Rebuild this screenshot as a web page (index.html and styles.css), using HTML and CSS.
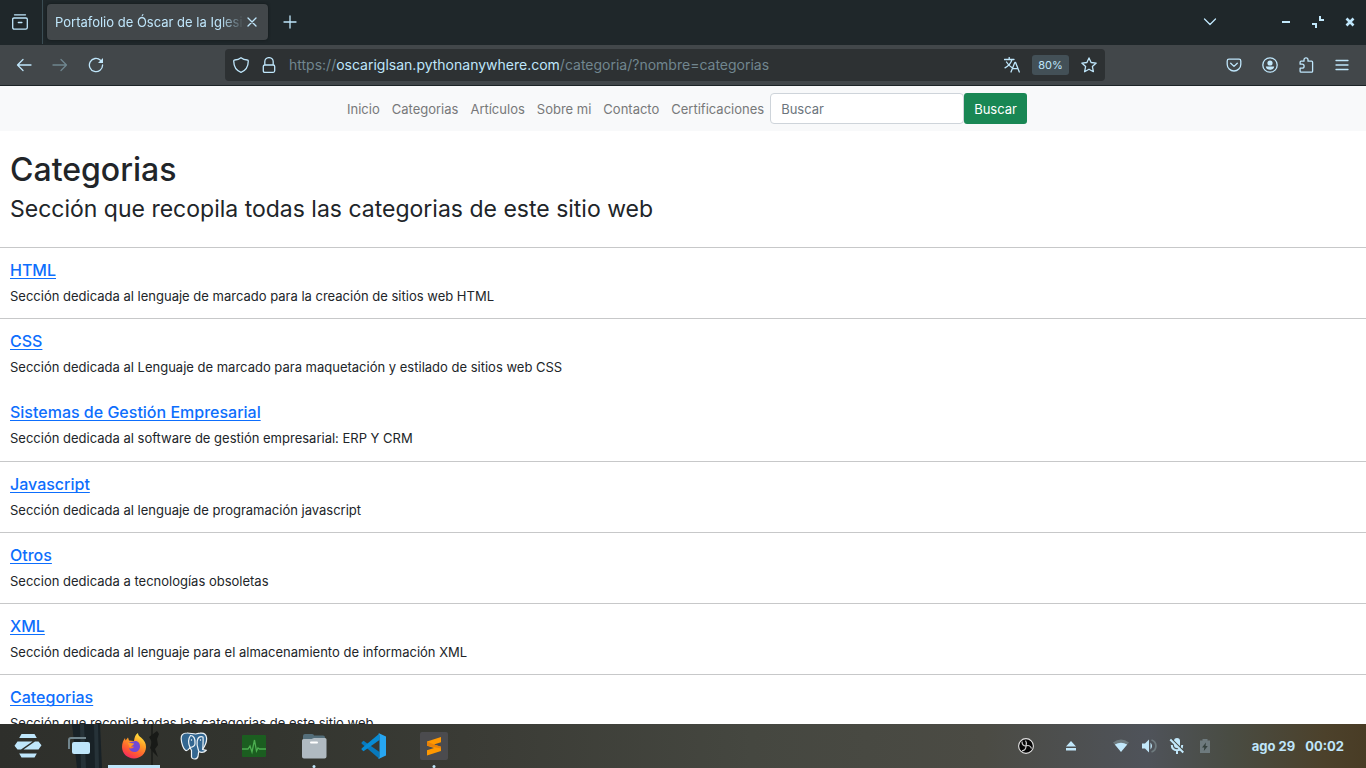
FILE: index.html
```html
<!DOCTYPE html>
<html lang="es">
<head>
<meta charset="utf-8">
<meta name="viewport" content="width=device-width, initial-scale=1">
<title>Portafolio de Óscar de la Iglesia</title>
<link rel="stylesheet" href="styles.css">
</head>
<body>
<header class="browser">
  <div class="tabbar">
    <button class="icon-btn view-btn" aria-label="Vista de Firefox"><svg class="icon" viewBox="0 0 16 16"><path d="M2.5 .8h11M2 4h12q1.300 0 1.300 1.300v8.200q0 1.700-1.700 1.700H2.400q-1.700 0-1.700-1.700V5.300Q.7 4 2 4zM6.300 8.500h3.600"/></svg></button>
    <div class="tab">
      <span class="tab-title">Portafolio de Óscar de la Iglesia</span>
      <button class="tab-close" aria-label="Cerrar pestaña"><svg class="icon small" viewBox="0 0 10 10"><path d="M1 1l8 8M9 1l-8 8"/></svg></button>
    </div>
    <button class="icon-btn new-tab" aria-label="Nueva pestaña"><svg class="icon" viewBox="0 0 16 16"><path d="M8 2v12M2 8h12"/></svg></button>
    <button class="icon-btn list-tabs" aria-label="Listar pestañas"><svg class="icon" viewBox="0 0 16 16"><path d="M2.500 5L8 10.500 13.500 5"/></svg></button>
    <div class="window-btns">
      <button class="win-btn" aria-label="Minimizar"><svg class="icon" viewBox="0 0 16 16"><path class="solid" d="M4 7h8v2H4z"/></svg></button>
      <button class="win-btn" aria-label="Restaurar"><svg class="icon" viewBox="0 0 16 16"><path class="solid" d="M9 2h2v3h3v2H9zM2 9h5v5H5v-3H2z"/></svg></button>
      <button class="win-btn" aria-label="Cerrar"><svg class="icon" viewBox="0 0 16 16"><path class="bold" d="M4.500 4.500l7 7M11.500 4.500l-7 7"/></svg></button>
    </div>
  </div>
  <div class="toolbar">
    <div class="history">
      <button class="icon-btn" aria-label="Atrás"><svg class="icon" viewBox="0 0 16 16"><path d="M15 8H1.500M7 2.500L1.500 8 7 13.500"/></svg></button>
      <button class="icon-btn dim" aria-label="Adelante"><svg class="icon" viewBox="0 0 16 16"><path d="M1 8h13.500M9 2.500L14.500 8 9 13.500"/></svg></button>
      <button class="icon-btn" aria-label="Recargar"><svg class="icon" viewBox="0 0 16 16"><path d="M14.600 8A6.600 6.600 0 1 1 12.500 3.200"/><path class="solid" d="M15 1v5h-5z"/></svg></button>
    </div>
    <div class="urlbar">
      <svg class="icon" viewBox="0 0 16 16"><path d="M8 .7C6 2.300 4 2.800 1.600 3c-.5 0-.9.5-.9 1C.8 9.500 3 13.500 8 15.300c5-1.800 7.200-5.800 7.300-11.300 0-.5-.4-1-.9-1C12 2.800 10 2.300 8 .7z"/></svg>
      <svg class="icon" viewBox="0 0 16 16"><path d="M3.800 8V4.800a4.200 4.200 0 0 1 8.400 0V8M3.800 8h8.400q1.500 0 1.500 1.500v4.300q0 1.500-1.500 1.500H3.800q-1.500 0-1.500-1.500V9.500Q2.300 8 3.800 8z"/></svg>
      <span class="url">https://<b>oscariglsan.pythonanywhere.com</b>/categoria/?nombre=categorias</span>
      <button class="url-btn" aria-label="Traducir"><svg class="icon" viewBox="0 0 16 16"><path d="M.5 2.500h9.500M5.200.5v2M8 2.500C7 6 4.500 9 1 10.800M2.500 5C4 7.500 5 8.800 7.500 10.300M7 15l3.800-9.500h.8L15.300 15M8.500 11.700h5.500"/></svg></button>
      <button class="zoom">80%</button>
      <button class="url-btn" aria-label="Marcador"><svg class="icon" viewBox="0 0 16 16"><path d="M8 .9l2.100 4.600 5.100.6-3.800 3.500 1 5.100L8 12.200l-4.400 2.500 1-5.100L.8 6.100l5.100-.6z"/></svg></button>
    </div>
    <div class="tools">
      <button class="icon-btn" aria-label="Pocket"><svg class="icon" viewBox="0 0 16 16"><path d="M3 2.200h10q1.800 0 1.800 1.800v3.200a6.800 6.800 0 0 1-13.600 0V4Q1.200 2.200 3 2.200zM4.700 6.200L8 9.400l3.300-3.200"/></svg></button>
      <button class="icon-btn" aria-label="Cuenta"><svg class="icon" viewBox="0 0 16 16"><circle cx="8" cy="8" r="7.200"/><circle class="solid" cx="8" cy="6" r="2.600"/><path class="solid" d="M3.800 9.500h8.400q-.5 3.300-4.200 3.300T3.800 9.500z"/></svg></button>
      <button class="icon-btn" aria-label="Extensiones"><svg class="icon" viewBox="0 0 16 16"><path d="M6 4.200V2.800a2 2 0 0 1 4 0v1.400h3.600q1 0 1 1v9q0 1-1 1H3.100q-1 0-1-1v-3h2a2 2 0 0 0 0-4h-2V5.200q0-1 1-1z"/></svg></button>
      <button class="icon-btn" aria-label="Menú"><svg class="icon" viewBox="0 0 16 16"><path d="M2 3.500h12M2 8h12M2 12.500h12"/></svg></button>
    </div>
  </div>
</header>

<div class="page">
  <nav class="navbar">
    <ul class="nav-list">
      <li><a class="nav-link" href="#">Inicio</a></li>
      <li><a class="nav-link" href="#">Categorias</a></li>
      <li><a class="nav-link" href="#">Artículos</a></li>
      <li><a class="nav-link" href="#">Sobre mi</a></li>
      <li><a class="nav-link" href="#">Contacto</a></li>
      <li><a class="nav-link" href="#">Certificaciones</a></li>
    </ul>
    <form class="search">
      <input class="search-input" type="search" placeholder="Buscar" aria-label="Buscar">
      <button class="search-btn" type="submit">Buscar</button>
    </form>
  </nav>
  <main>
    <div class="intro">
      <h1 class="title">Categorias</h1>
      <h2 class="subtitle">Sección que recopila todas las categorias de este sitio web</h2>
    </div>
    <article class="entry"><h3 class="entry-title"><a href="#">HTML</a></h3><p class="entry-text">Sección dedicada al lenguaje de marcado para la creación de sitios web HTML</p></article>
    <article class="entry"><h3 class="entry-title"><a href="#">CSS</a></h3><p class="entry-text">Sección dedicada al Lenguaje de marcado para maquetación y estilado de sitios web CSS</p></article>
    <article class="entry joined"><h3 class="entry-title"><a href="#">Sistemas de Gestión Empresarial</a></h3><p class="entry-text">Sección dedicada al software de gestión empresarial: ERP Y CRM</p></article>
    <article class="entry"><h3 class="entry-title"><a href="#">Javascript</a></h3><p class="entry-text">Sección dedicada al lenguaje de programación javascript</p></article>
    <article class="entry"><h3 class="entry-title"><a href="#">Otros</a></h3><p class="entry-text">Seccion dedicada a tecnologías obsoletas</p></article>
    <article class="entry"><h3 class="entry-title"><a href="#">XML</a></h3><p class="entry-text">Sección dedicada al lenguaje para el almacenamiento de información XML</p></article>
    <article class="entry"><h3 class="entry-title"><a href="#">Categorias</a></h3><p class="entry-text">Sección que recopila todas las categorias de este sitio web</p></article>
  </main>
</div>

<footer class="taskbar">
  <svg class="wallpaper" width="170" height="44" viewBox="0 0 170 44"><path d="M72 0h28l2 44H77z" fill="#182126"/><path d="M80 0h4l2 44h-5zM94 0h4l1 44h-4z" fill="#263238"/><path d="M151 0h2v44h-2z" fill="#1f211d"/><path d="M153 10l4-3 2 3-2 5 1 6-3 4 3 8-5-5-3-4 2-6-3-5z" fill="#181a17"/></svg>
  <div class="launchers">
    <button class="app narrow" aria-label="Zorin"><svg width="28" height="28" viewBox="0 0 28 28"><g fill="#bfe6fb"><path d="M7.500 2h13l2.300 4H5.200zM3.500 9.500h15L7 17.500H3.500L.5 13.700zM24.500 17.500h-15L21 9.500h3.500l3 3.800zM5.200 21.500h17.600L20.500 25.500h-13z"/></g></svg></button>
    <button class="app narrow" aria-label="Vista de tareas"><svg width="24" height="20" viewBox="0 0 24 20"><path d="M2 13V4q0-2 2-2h15" fill="none" stroke="#71858d" stroke-width="2"/><rect x="5" y="6" width="18" height="12" rx="2" fill="#bfe6fb"/></svg></button>
    <button class="app active" aria-label="Firefox"><svg width="26" height="26" viewBox="0 0 26 26"><defs><linearGradient id="ff" x1=".8" y1="0" x2=".3" y2="1"><stop offset="0" stop-color="#fff044"/><stop offset=".4" stop-color="#ff9a25"/><stop offset=".75" stop-color="#ff5634"/><stop offset="1" stop-color="#f52665"/></linearGradient></defs><path fill="url(#ff)" d="M17 0c0 2 1 3 3 4.500C23.500 7.500 25 10 25 14c0 6.500-5.300 11.500-12 11.500S1 20.500 1 14c0-4 1.500-7 3-9l.5 2.500L7 4.500l1 3 5 .5c.5-4 1.500-6.500 4-8z"/><path fill="#7248d5" d="M8 9.500l6-1.500c3.500 0 5 2.500 5 5.500 0 3.500-2.500 5.500-5.500 5.500-2.500 0-5-1.500-5.500-4 2 1 4 .5 5-1.200l-3-.3z"/><path fill="#ff9827" d="M6.500 9.500l6.500 1c0 1.700-2.500 1.700-3 3.500-1 1-2 0-2-1.500z"/></svg></button>
    <button class="app" aria-label="PostgreSQL"><svg width="28" height="28" viewBox="0 0 28 28"><g fill="#336791" stroke="#edf3f6" stroke-width="1.200" stroke-linejoin="round"><path d="M7 1C2.500 1 1 3.500 1.200 7c.2 4 2 10 4.500 11.500 2 .7 3.300-1.500 4.300-3l1.500 3V25c.5 2.500 5.500 3 6.500-.5l.7-5c2.800 1.300 5.800.7 7.600-1.200l-3.800-.8c2.500-3.500 4.500-8.500 4-12C26 2.200 23.500.7 20 1.200c-2 .2-3 .5-4.500.8C13 2 10 .9 7 1z"/><path fill="none" d="M10 15.500C8 11 8 7 10.500 3.500c3 0 5 3 4.500 8 0 2.500-2 3.500-5 4M18.700 19c-1.200-4-2.200-6-1.500-10C18 5 20 4 23 5c.5 4-.2 8.500-.2 12.500"/></g><circle cx="11.500" cy="8" r=".7" fill="#fff"/><circle cx="20.500" cy="8" r=".7" fill="#fff"/></svg></button>
    <button class="app" aria-label="Monitor del sistema"><svg width="26" height="22" viewBox="0 0 26 22"><rect x="1" width="24" height="22" rx="1" fill="#1b5e20"/><path d="M1 14h6l2-3 2 6 2.500-12 2 11 1.500-3 1.500 1H25" fill="none" stroke="#4caf50" stroke-width="1.300"/></svg></button>
    <button class="app running" aria-label="Archivos"><svg width="26" height="26" viewBox="0 0 26 26"><path d="M2 9V3q0-2 2-2h7q2 0 2 1.500h9q2 0 2 2V10z" fill="#546e7a"/><path d="M1 7.500q0-1.500 1.500-1.500h8L13 5h11q1.500 0 1.500 1.500v17q0 2-2 2H3q-2 0-2-2z" fill="#b0bac1"/><rect x="9" y="8.500" width="8" height="2" rx="1" fill="#fff"/></svg></button>
    <button class="app" aria-label="Visual Studio Code"><svg width="26" height="26" viewBox="0 0 26 26"><path d="M2.500 7.800L.8 9.300q-.7.700 0 1.400L18.500 26V19z" fill="#0879bd"/><path d="M2.500 18.200L.8 16.700q-.7-.7 0-1.400L18.500.5V7z" fill="#078bd4"/><path d="M18.500.5L25 3.500v19l-6.500 3q-.8.300-1.500-.5 1.500.3 1.500-1.500v-21q0-1.800-1.500-1.500.7-.8 1.500-.5z" fill="#27a6f2"/></svg></button>
    <button class="app running" aria-label="Sublime Text"><svg width="28" height="28" viewBox="0 0 28 28"><rect width="28" height="28" rx="2" fill="#4b4b4e"/><path d="M21 5v5.200l-7 2.300 7 2.200v4.300L7 23.500v-5.200l7-2.200-7-2.300V9.500z" fill="#ff9800"/><path d="M7 9.500l7 3 7 2.200v1.800L7 13.800zM14 12.500z" fill="#e98108"/></svg></button>
  </div>
  <div class="tray">
    <svg width="16" height="16" viewBox="0 0 16 16"><circle cx="8" cy="8" r="7.400" fill="#050505" stroke="#e4e4e4" stroke-width="1.100"/><path d="M4 3.500c0 3 1.500 4.500 4 4.500 2-1 4.500-.5 5.500 2.500M8 8c0 2.500-1 4.500-4 4.800M8 8c.5-2 1-3.500-.5-5.300" fill="none" stroke="#ccc" stroke-width="1.200"/></svg>
    <svg class="eject" width="16" height="16" viewBox="0 0 16 16"><path class="solid" d="M8 3l5 5.500H3zM3 10h10v2.500H3z"/></svg>
    <div class="status">
      <svg width="16" height="16" viewBox="0 0 16 16"><path class="faint" d="M8 13.500L0 4.500q8-6 16 0z"/><path class="solid" d="M8 14L1.800 6.500q6.200-3.500 12.400 0z"/></svg>
      <svg width="16" height="16" viewBox="0 0 16 16"><path class="solid" d="M1 5.500h3L8 1.500v13l-4-4H1zM9.500 4.500q3 3.500 0 7z"/><path d="M10.500 2a6.300 6.300 0 0 1 0 12" fill="none" stroke="#6e7a7e" stroke-width="1.800"/></svg>
      <svg width="16" height="16" viewBox="0 0 16 16"><rect class="solid" x="5" y="0" width="6" height="10" rx="3"/><path d="M2.800 7q0 5 5.200 5.300 5.200-.3 5.200-5.300M8 12.500V16" fill="none" stroke="#c2e8fb" stroke-width="2"/><path d="M2.500 1l13 13" stroke="#464a46" stroke-width="1.600"/><path d="M1.300 1.500l13 13" stroke="#c2e8fb" stroke-width="2"/></svg>
      <svg width="16" height="16" viewBox="0 0 16 16"><path class="faint" d="M5.500 1h5v1.500H13V15H3V2.500h2.500z"/><path d="M9 4.500L5 9.500h2.300L6.800 13l4-5H8.500z" fill="#35413e"/></svg>
    </div>
    <time class="clock" datetime="08-29T00:02"><span>ago 29</span><span>00:02</span></time>
  </div>
</footer>
</body>
</html>
```
FILE: styles.css
```css
* { box-sizing: border-box; }

body {
  margin: 0;
  height: 100vh;
  display: flex;
  flex-direction: column;
  overflow: hidden;
  font-family: Inter, "Noto Sans", sans-serif;
  font-size: 13px;
  line-height: 20px;
  color: #212529;
  background: #fff;
}

button {
  font: inherit;
  color: inherit;
  background: none;
  border: 0;
  padding: 0;
}

svg { display: block; flex: none; }

.icon {
  width: 16px;
  height: 16px;
  fill: none;
  stroke: currentColor;
  stroke-width: 1.3;
  stroke-linecap: round;
  stroke-linejoin: round;
}
.icon.small { width: 10px; height: 10px; }
.solid { fill: #c2e8fb; stroke: none; }
.bold { stroke-width: 2.6; stroke-linecap: butt; }
.faint { fill: #6e7a7e; }

/* Browser chrome */
.browser { flex: none; color: #bfe6fb; border-bottom: 1px solid #1c2326; }

.tabbar {
  display: flex;
  align-items: center;
  height: 45px;
  padding-bottom: 1px;
  background: #1f272a;
}
.icon-btn { display: grid; place-items: center; width: 36px; height: 32px; }
.icon-btn.dim { color: #6f868f; }
.view-btn { width: 43px; height: 44px; padding-right: 2px; border-right: 1px solid #3b4d54; }
.tab {
  display: flex;
  align-items: center;
  width: 221px;
  height: 36px;
  margin: 0 4px;
  padding: 0 8px;
  border-radius: 4px;
  background: #42474a;
  box-shadow: 0 0 3px #111719;
}
.tab-title {
  flex: 1;
  overflow: hidden;
  white-space: nowrap;
  mask-image: linear-gradient(to left, transparent, #000 24px);
}
.tab-close { display: grid; place-items: center; width: 16px; height: 20px; }
.list-tabs { margin-left: auto; }
.window-btns { display: flex; gap: 16px; padding: 0 8px 0 50px; }
.win-btn { width: 16px; height: 16px; }

.toolbar {
  display: flex;
  align-items: center;
  justify-content: space-between;
  height: 40px;
  padding: 0 6px;
  background: #42474a;
}
.history { display: flex; flex: 219; }
.tools { display: flex; flex: 255; justify-content: flex-end; }
.urlbar {
  flex: 864;
  display: flex;
  align-items: center;
  gap: 12px;
  height: 32px;
  padding: 0 8px;
  border-radius: 4px;
  background: #2d3133;
}
.url { flex: 1; font-size: 14px; color: #71868f; white-space: nowrap; }
.url b { font-weight: 400; color: #bfe6fb; }
.zoom { width: 37px; height: 20px; border-radius: 3px; font-size: 11px; background: #435057; }

/* Site */
.page { flex: 1; min-height: 0; overflow: hidden; }
.navbar {
  display: flex;
  justify-content: center;
  align-items: center;
  padding: 7px 0 7px 2px;
  background: #f8f9fa;
}
.nav-list { display: flex; margin: 0; padding: 0; list-style: none; }
.nav-link { padding: 0 6px; color: #777879; text-decoration: none; }
.search { display: flex; }
.search-input {
  width: 194px;
  height: 31px;
  padding: 0 10px;
  border: 1px solid #ced4da;
  border-radius: 4px;
  font: inherit;
  color: #212529;
  background: #fff;
}
.search-input::placeholder { color: #6c757d; opacity: 1; }
.search-btn { padding: 0 10px; border-radius: 3px; color: #fff; background: #198754; }

.intro { padding: 20px 10px 25px; }
.title, .subtitle, .entry-title { margin: 0; font-weight: 500; }
.title { margin-bottom: 7px; font-size: 32px; line-height: 38px; }
.subtitle { font-size: 23px; font-weight: 400; line-height: 26px; }

.entry { padding: 13px 10px 12px; border-top: 1px solid #c7c8c9; }
.entry.joined { padding-bottom: 13px; border-top-color: transparent; }
.entry-title { margin-bottom: 6px; font-size: 16px; line-height: 19px; }
.entry-title a {
  color: #0d6efd;
  text-decoration-thickness: 1px;
  text-underline-offset: 2px;
  text-decoration-skip-ink: none;
}
.entry-text { margin: 0; }

/* Desktop panel */
.taskbar {
  position: relative;
  flex: none;
  display: flex;
  justify-content: space-between;
  height: 44px;
  padding: 0 22px 0 2px;
  color: #bfe6fb;
  background: linear-gradient(90deg, #2e2f2b, #32342e 18%, #3b3c36 36%, #454740 55%, #4b4b44 72%, #4f535a 84%, #494c43 90%, #4c412b 97%, #493c25);
}
.wallpaper { position: absolute; left: 0; top: 0; }
.launchers { display: flex; }
.app { position: relative; display: grid; place-items: center; width: 60px; height: 44px; }
.app.narrow { width: 51px; }
.app.active::after, .app.running::after {
  content: "";
  position: absolute;
  bottom: 0;
  left: 50%;
  width: 52px;
  height: 3px;
  transform: translateX(-50%);
  background: #bfe6fb;
}
.app.running::after { width: 3px; border-radius: 2px; }
.tray { display: flex; align-items: center; }
.eject { margin: 0 34px 0 29px; }
.status { display: flex; gap: 12px; margin-right: 39px; }
.clock { display: flex; gap: 10px; font-weight: 700; }
```
